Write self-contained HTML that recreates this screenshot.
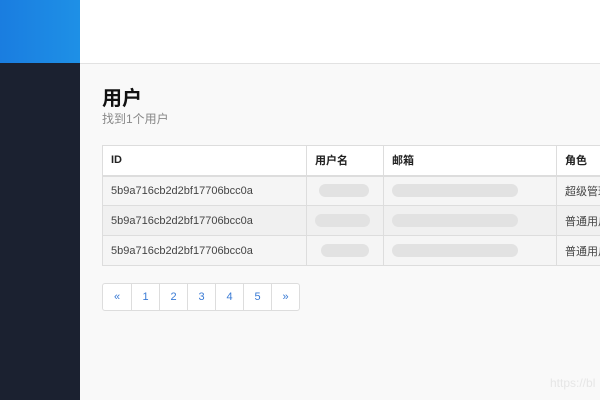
<!DOCTYPE html><html><head><meta charset="utf-8"><style>
*{margin:0;padding:0;box-sizing:border-box}
body{width:600px;height:400px;overflow:hidden;background:#f9f9f9;font-family:"Liberation Sans","Noto Sans CJK SC",sans-serif;position:relative}
.logo{position:absolute;left:0;top:0;width:80px;height:63px;background:linear-gradient(90deg,#1a7de0,#1e90e6)}
.side{position:absolute;left:0;top:63px;width:80px;height:337px;background:#1b2130}
.top{position:absolute;left:80px;top:0;width:520px;height:64px;background:#fff;border-bottom:1px solid #e2e2e2}
h1{position:absolute;left:102px;top:82px;font-size:20px;font-weight:bold;color:#111}
.sub{position:absolute;left:102px;top:110px;font-size:12px;color:#888}
table{position:absolute;left:102px;top:145px;width:560px;table-layout:fixed;border-collapse:collapse;font-size:11px;color:#444;background:#fff}
td,th{border:1px solid #ddd;height:30px;padding:0 8px;text-align:left;white-space:nowrap;overflow:hidden}
th{font-weight:bold;color:#222;border-bottom:2px solid #ddd}
tr.a td{background:#f5f5f5}tr.b td{background:#f0f0f0}
.bl{display:inline-block;height:13px;border-radius:7px;background:#e2e2e2;vertical-align:middle}
.pg{position:absolute;left:102px;top:283px;display:flex;border:1px solid #ddd;border-radius:3px;background:#fff}
.pg span{width:28px;height:26px;line-height:26px;text-align:center;font-size:11px;color:#3a7bd5;border-left:1px solid #ddd}
.pg span:first-child{border-left:none}
.wm{position:absolute;left:550px;top:376px;font-size:12px;color:#e6e6e6}
</style></head><body>
<div class="logo"></div><div class="side"></div><div class="top"></div>
<h1>用户</h1><div class="sub">找到1个用户</div>
<table>
<colgroup><col style="width:204px"><col style="width:77px"><col style="width:173px"><col style="width:106px"></colgroup>
<tr><th>ID</th><th>用户名</th><th>邮箱</th><th>角色</th></tr>
<tr class="a"><td>5b9a716cb2d2bf17706bcc0a</td><td><span class="bl" style="width:50px;margin-left:4px"></span></td><td><span class="bl" style="width:126px"></span></td><td>超级管理员</td></tr>
<tr class="b"><td>5b9a716cb2d2bf17706bcc0a</td><td><span class="bl" style="width:55px"></span></td><td><span class="bl" style="width:126px"></span></td><td>普通用户</td></tr>
<tr class="a"><td>5b9a716cb2d2bf17706bcc0a</td><td><span class="bl" style="width:48px;margin-left:6px"></span></td><td><span class="bl" style="width:126px"></span></td><td>普通用户</td></tr>
</table>
<div class="pg"><span>«</span><span>1</span><span>2</span><span>3</span><span>4</span><span>5</span><span>»</span></div>
<div class="wm">https://bl</div>
</body></html>
